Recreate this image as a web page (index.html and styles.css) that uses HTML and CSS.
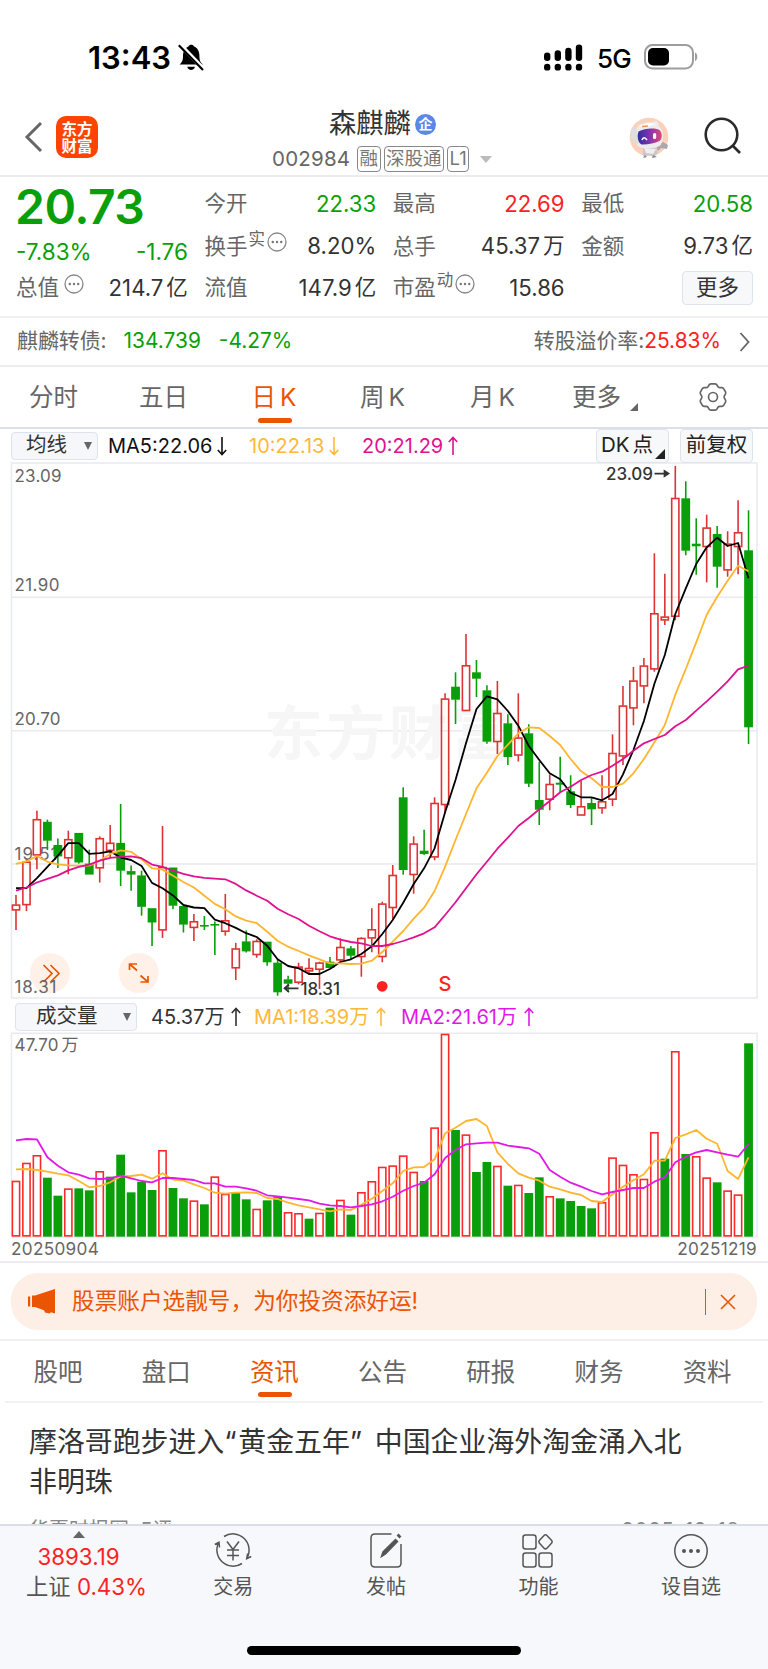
FILE: index.html
```html
<!DOCTYPE html>
<html lang="zh-CN">
<head>
<meta charset="utf-8">
<title>森麒麟 002984</title>
<link rel="stylesheet" href="styles.css">
</head>
<body>
<div class="status">
  <span class="clock">13:43</span>
  <svg class="bell" width="26" height="27" viewBox="0 0 26 27"><path d="M1.500 20.500c2.500-2 3.500-4 3.500-8.500C5 7 7.700 3.500 10.400 2.600 11.300.2 15.200.2 16.100 2.600c3 1 5.300 4.400 5.300 9 0 5 1 7 3.600 9z"/><path d="M9.300 22.800h7.600c-.5 4.200-7.100 4.200-7.600 0z"/><path d="M1.500 0 25 24.500" stroke="#fff" stroke-width="4.200"/><path d="M.8 1.200 25 26" stroke="#000" stroke-width="2.200"/></svg>
  <svg class="signal" width="39" height="27" viewBox="0 0 39 27"><g stroke="#000" stroke-width="6.400" stroke-linecap="round"><path d="M3.200 11.700v2M13.800 9.500v4.200M24.400 7v6.700M35 3.600v10.100"/><path d="M3.200 23v.4M13.800 23v.4M24.400 23v.4M35 23v.4"/></g></svg>
  <span class="net">5G</span>
  <svg class="battery" width="54" height="26" viewBox="0 0 54 26"><rect x="1" y="1" width="48" height="23.500" rx="7.500" fill="none" stroke="#9d9d9d" stroke-width="2"/><rect x="4" y="4" width="21" height="17.500" rx="5" fill="#000"/><path d="M51 8.500c3 1 3 7.500 0 8.500z" fill="#9d9d9d"/></svg>
</div>

<header class="head">
  <svg class="back" width="20" height="34" viewBox="0 0 20 34"><path d="M17 3 3 17l14 14" fill="none" stroke="#666" stroke-width="3"/></svg>
  <div class="logo">东方<br>财富</div>
  <div class="title">
    <div class="name">森麒麟<span class="ent">企</span></div>
    <div class="code"><span class="num">002984</span><span class="tag">融</span><span class="tag">深股通</span><span class="tag">L1</span><i class="drop"></i></div>
  </div>
  <svg class="robot" width="42" height="42" viewBox="0 0 42 42">
    <defs><linearGradient id="visor" x1="0" x2="1"><stop offset="0" stop-color="#2e2e9e"/><stop offset=".5" stop-color="#8333b0"/><stop offset="1" stop-color="#e04a72"/></linearGradient></defs>
    <circle cx="21" cy="20" r="19.300" fill="#fdd0b9"/>
    <path d="M15 31h13l2 5-4 4-5-2-6 1z" fill="#c9c7c9"/><path d="M16 31l12 1-3 5-7-1z" fill="#eee"/><path d="M28 29l7-4 5 3-1 4-6-1-3 3z" fill="#aaa8ab"/>
    <path d="M17 38l-2 3 4-1zM25 38l-1 3 5-1z" fill="#888"/>
    <path d="M8 16C8 8 13 5.500 22 5.500c4 0 5-2 7-1 2 .8 1 3 2 5 5 3 5 13 2 18-2 4-22 6-24 0-2-3-1-7-1-11.500z" fill="#ececee"/>
    <path d="M5 10c-4 5-3 12 4 18l2-3-2-11z" fill="#dededf"/>
    <path d="M11 9l9-3 8 1-9 3z" fill="#fff"/><path d="M14 9.500l6-.5" stroke="#f09a48" stroke-width="1.500"/>
    <path d="M10.500 14.500c6-3 15-4 21-1.500 3 3 3 8.500 0 11-5 2.500-13 4-18 3.500-4-2-4.500-9-3-13z" fill="url(#visor)"/>
    <path d="M14 23c1-3 3-3 5 0" fill="none" stroke="#fff" stroke-width="1.500"/><rect x="25" y="16" width="3.200" height="6" rx="1.600" fill="#fff"/>
  </svg>
  <svg class="search" width="40" height="40" viewBox="0 0 40 40"><circle cx="18.500" cy="17.500" r="15.800"/><path d="m29.500 28.500 7.500 7.500"/></svg>
</header>

<section class="quote">
  <div class="lead">
    <div class="price">20.73</div>
    <div class="chg"><span>-7.83%</span><span>-1.76</span></div>
    <div class="row last"><label>总值<svg class="dots" viewBox="0 0 20 20"><use href="#more"/></svg></label><b>214.7<em>亿</em></b></div>
  </div>
  <div class="col">
    <div class="row"><label>今开</label><b class="down">22.33</b></div>
    <div class="row"><label>换手<sup>实</sup><svg class="dots" viewBox="0 0 20 20"><use href="#more"/></svg></label><b>8.20%</b></div>
    <div class="row"><label>流值</label><b>147.9<em>亿</em></b></div>
  </div>
  <div class="col">
    <div class="row"><label>最高</label><b class="up">22.69</b></div>
    <div class="row"><label>总手</label><b>45.37<em>万</em></b></div>
    <div class="row"><label>市盈<sup>动</sup><svg class="dots" viewBox="0 0 20 20"><use href="#more"/></svg></label><b>15.86</b></div>
  </div>
  <div class="col">
    <div class="row"><label>最低</label><b class="down">20.58</b></div>
    <div class="row"><label>金额</label><b>9.73<em>亿</em></b></div>
    <div class="row end"><span class="morebtn">更多</span></div>
  </div>
  <svg width="0" height="0" class="defs"><symbol id="more" viewBox="0 0 20 20"><circle cx="10" cy="10" r="9" fill="none" stroke="#888" stroke-width="1.300"/><circle cx="5.800" cy="10" r="1.200" fill="#777"/><circle cx="10" cy="10" r="1.200" fill="#777"/><circle cx="14.200" cy="10" r="1.200" fill="#777"/></symbol></svg>
</section>

<section class="bond">
  <span class="bname">麒麟转债:</span><span class="down bprice">134.739</span><span class="down bpct">-4.27%</span>
  <span class="prem">转股溢价率:</span><span class="up rate">25.83%</span>
  <svg class="chev" width="12" height="20" viewBox="0 0 12 20"><path d="m1.500 1 8 9-8 9" fill="none" stroke="#666" stroke-width="1.800"/></svg>
</section>

<nav class="periods">
  <span>分时</span><span>五日</span><span class="on">日<i>K</i></span><span>周<i>K</i></span><span>月<i>K</i></span><span class="moretab">更多<i class="corner"></i></span>
  <span class="gear"><svg width="30" height="30" viewBox="0 0 30 30" fill="none" stroke="#666" stroke-width="1.700"><path d="M11.200 2.800q.8-1 2-1h3.600q1.200 0 2 1l1.200 1.900q.7 1 1.900 1h2q1.300.1 1.900 1.200l1.700 3q.5 1.100-.1 2.200l-1 1.700q-.6 1.200 0 2.400l1 1.700q.6 1.100.1 2.200l-1.700 3q-.6 1.100-1.900 1.200h-2q-1.200 0-1.900 1l-1.200 1.900q-.8 1-2 1h-3.600q-1.200 0-2-1L10 25.300q-.7-1-1.900-1h-2q-1.300-.1-1.900-1.200l-1.700-3q-.5-1.100.1-2.200l1-1.700q.6-1.200 0-2.400l-1-1.700q-.6-1.100-.1-2.200l1.700-3q.6-1.100 1.900-1.200h2q1.200 0 1.900-1z"/><circle cx="15" cy="15" r="4.500"/></svg></span>
</nav>

<section class="malegend">
  <span class="select sel1">均线<i></i></span>
  <span class="ma5">MA5:22.06<svg class="arr" viewBox="0 0 10 20"><path d="M5 1v17.500M.8 14 5 18.500 9.200 14"/></svg></span>
  <span class="ma10">10:22.13<svg class="arr" viewBox="0 0 10 20"><path d="M5 1v17.500M.8 14 5 18.500 9.200 14"/></svg></span>
  <span class="ma20">20:21.29<svg class="arr" viewBox="0 0 10 20"><path d="M5 19V1.500M.8 6 5 1.500 9.200 6"/></svg></span>
  <span class="box dk">DK<em>点</em><i></i></span><span class="box fq">前复权</span>
</section>

<svg class="kline" id="kline" width="768" height="537" viewBox="0 462 768 537">
  <g class="frame"><rect x="11.500" y="463" width="745.500" height="535"/><path d="M11.500 597.300H757M11.500 730.700H757M11.500 864H757"/></g>
  <text class="mark" x="264" y="755" textLength="246">东方财富</text>
  <circle cx="50" cy="973" r="20" fill="#fff0e8"/><circle cx="138.700" cy="973" r="20" fill="#fff0e8"/>
  <path class="tool" d="m43.500 965 8.500 8.500-8.500 8.500M50.500 965l8.500 8.500-8.500 8.500"/>
  <path class="tool" d="M137 970.500l-7.500-6.500M129.500 970v-6h7.500M140.500 975.500l7.500 6.500M148 976v6h-7.500"/>
  <g class="axis"><text x="14.500" y="481.500" textLength="47">23.09</text><text x="14.500" y="591" textLength="45">21.90</text><text x="14.500" y="724.800" textLength="46">20.70</text><text x="14.500" y="859.500" textLength="43">19.51</text><text x="14.500" y="993" textLength="42">18.31</text></g>
  <g id="candles"></g>
  <g class="ext"><text x="606" y="480" textLength="47">23.09</text><path d="M654.500 473.600h14M664.500 471l4 2.600-4 2.600z"/><text x="300.500" y="995" textLength="39.500">18.31</text><path d="M284 988.300h14.500M289 984.500l-4.500 3.800 4.500 3.800"/></g>
  <circle cx="382.200" cy="986.300" r="5.400" fill="#fb2222"/><text class="sell" x="438.500" y="991">S</text>
</svg>

<section class="vollegend">
  <span class="select sel2">成交量<i></i></span>
  <span class="v0">45.37万<svg class="arr" viewBox="0 0 10 20"><path d="M5 19V1.500M.8 6 5 1.500 9.200 6"/></svg></span>
  <span class="v1">MA1:18.39万<svg class="arr" viewBox="0 0 10 20"><path d="M5 19V1.500M.8 6 5 1.500 9.200 6"/></svg></span>
  <span class="v2">MA2:21.61万<svg class="arr" viewBox="0 0 10 20"><path d="M5 19V1.500M.8 6 5 1.500 9.200 6"/></svg></span>
</section>

<svg class="volume" width="768" height="206" viewBox="0 1032 768 206">
  <g class="frame"><rect x="11.500" y="1033.300" width="745.500" height="203.700"/></g>
  <g class="axis"><text x="14.500" y="1051" textLength="44">47.70</text><text x="61.500" y="1051">万</text></g>
  <g id="bars"></g>
</svg>
<div class="dates"><span>20250904</span><span>20251219</span></div>

<div class="promo-wrap"><div class="promo">
  <svg class="horn" width="28" height="25" viewBox="0 0 28 25" fill="#ea5504"><path d="M0 7.500h2.200v10H0zM4 6.500h3L27 0v24.500l-4-1.300-1.500 1.300-4.500-1-1-2.300L7 18H4z"/></svg>
  <span class="ptext">股票账户选靓号，为你投资添好运!</span>
  <i class="bar"></i>
  <svg class="close" width="16" height="16" viewBox="0 0 16 16"><path d="m1 1 14 14M15 1 1 15" stroke="#ea5504" stroke-width="1.600"/></svg>
</div></div>

<nav class="tabs"><span>股吧</span><span>盘口</span><span class="on">资讯</span><span>公告</span><span>研报</span><span>财务</span><span>资料</span></nav>

<article class="news">
  <h2>摩洛哥跑步进入<q>“</q>黄金五年<q class="r">”</q>中国企业海外淘金涌入北<br>非明珠</h2>
  <div class="meta"><span>华夏时报网&nbsp; 5评</span><span class="day">2025-12-18</span></div>
</article>

<footer class="dock">
  <div class="index"><i class="tri"></i><div class="pt">3893.19</div><div class="pc">上证 <b>0.43%</b></div></div>
  <div class="item"><svg width="38" height="36" viewBox="0 0 38 36"><path d="M10 4.500A16.200 16.200 0 0 1 33 26M28 31.500A16.200 16.200 0 0 1 5 10M.8 12.500 5 10.300l.5 5.200M37.200 24.500 32.700 26.700l1-5.200M13 9.500l6 8 6-8M19 17.500v11M13 18h12M13 23.500h12"/></svg><span>交易</span></div>
  <div class="item"><svg width="38" height="36" viewBox="0 0 38 36"><path d="M24.500 2H8Q4 2 4 6v25q0 4 4 4h22q4 0 4-4V12"/><path d="M14.500 24.500 16 20 28.500 7.500l2 2L18.500 22z" fill="#555"/><path d="m31 5 2-2" stroke-width="4"/></svg><span>发帖</span></div>
  <div class="item"><svg width="38" height="36" viewBox="0 0 38 36"><rect x="4" y="3" width="13" height="14" rx="2.500"/><rect x="4" y="21" width="13" height="14" rx="2.500"/><rect x="20" y="21" width="13" height="14" rx="2.500"/><path d="m25.300 3.200-5 5.300q-1 1.300 0 2.600l5 5.300q1.200 1 2.400 0l5-5.300q1-1.300 0-2.600l-5-5.300q-1.200-1-2.400 0z"/></svg><span>功能</span></div>
  <div class="item"><svg width="38" height="36" viewBox="0 0 38 36"><circle cx="19" cy="19" r="16.200"/><g fill="#555" stroke="none"><circle cx="12" cy="19" r="2"/><circle cx="19" cy="19" r="2"/><circle cx="26" cy="19" r="2"/></g></svg><span>设自选</span></div>
  <i class="home"></i>
</footer>
<script src="chart.js"></script>
</body>
</html>
```
FILE: styles.css
```css
* { box-sizing: border-box; }
body {
  margin: 0; width: 768px; height: 1669px; overflow: hidden;
  display: flex; flex-direction: column; background: #fff; color: #333;
  font-family: Inter, "Noto Sans CJK SC", sans-serif; line-height: 1;
}
body > * { flex: none; }
i, em, b { font-style: normal; font-weight: 400; }
svg { display: block; flex: none; }
.down { color: #0a9f0a !important; }
.up { color: #fb2222 !important; }

.status { height: 98px; display: flex; align-items: center; padding: 16px 70px 0 88px; color: #000; }
.clock { font-size: 31px; font-weight: 600; width: 90px; }
.net { font-size: 26px; font-weight: 500; margin: 3px 13px 0 14px; letter-spacing: -.8px; }
.signal { margin-left: auto; }

.head { height: 79px; display: flex; position: relative; border-bottom: 2px solid #ececee; padding-left: 24px; align-items: flex-start; }
.back { margin-top: 22px; }
.logo { margin: 18px 0 0 12px; width: 42px; height: 42px; border-radius: 10px; background: #ff4400; color: #fff; font-size: 15.500px; line-height: 17px; font-weight: 700; text-align: center; padding-top: 4px; font-family: "Noto Sans CJK SC", sans-serif; }
.title { width: 230px; margin-left: 174px; }
.name { display: flex; align-items: center; font-size: 27.300px; height: 30px; margin: 11px 0 0 57px; }
.ent { width: 21px; height: 21px; border-radius: 50%; background: #5b87e8; color: #fff; font-size: 14px; font-weight: 700; line-height: 20px; text-align: center; margin-left: 4px; }
.code { display: flex; align-items: center; color: #666; font-size: 20.500px; margin-top: 6px; height: 28px; }
.num { letter-spacing: .2px; width: 85px; }
.tag { border: 1.500px solid #888; border-radius: 4px; height: 26px; line-height: 23px; font-size: 18.500px; padding: 0 1.500px; margin-right: 3px; color: #777; }
.drop { border: 6px solid transparent; border-top: 7px solid #bbb; border-bottom: 0; margin-left: 8px; }
.robot { margin: 19px 0 0 126px; }
.search { margin: 19px 0 0 33px; fill: none; stroke: #2a2a2a; stroke-width: 2.600; }

.quote { height: 141px; display: flex; gap: 16.500px; padding: 7px 15px 0 16px; border-bottom: 2px solid #f0f0f2; position: relative; }
.defs { position: absolute; }
.lead { width: 172px; color: #0a9f0a; }
.col { width: 172px; }
.price { font-size: 48px; font-weight: 600; height: 46px; line-height: 46px; letter-spacing: -.5px; margin-left: -1px; }
.chg { display: flex; justify-content: space-between; font-size: 22.500px; height: 37px; line-height: 44px; }
.row { display: flex; justify-content: space-between; align-items: center; height: 41.500px; font-size: 22.200px; }
.col .row:first-child { margin-top: -1px; height: 42.500px; padding-bottom: 1px; }
.row label { color: #666; font-size: 21.500px; display: flex; align-items: center; }
.row b { color: #333; display: flex; align-items: center; }
.row b em { font-size: 21.500px; margin-left: 3px; }
.row sup { font-size: 16.500px; margin: -15px 2px 0 1px; line-height: 1; }
.dots { width: 20px; height: 20px; margin: -8px 0 0 0; }
.last label .dots { margin-left: 5px; }
.row.end { justify-content: flex-end; }
.morebtn { width: 71px; height: 34px; line-height: 31px; border: 1.500px solid #dfe3ea; border-radius: 4px; background: #f7f8fa; text-align: center; font-size: 21.500px; }

.bond { height: 49px; display: flex; align-items: center; padding: 0 17px 0 17px; font-size: 20.900px; border-bottom: 2px solid #ececee; }
.bname, .prem { color: #666; }
.bprice { margin-left: 17px; }
.bpct { margin-left: 18px; }
.prem { margin-left: auto; }
.chev { margin-left: 18px; }

.periods { height: 62px; position: relative; display: flex; align-items: center; font-size: 24.500px; color: #666; border-bottom: 2px solid #dcdfe8; padding-left: 29px; }
.periods span { flex: none; width: 110px; position: relative; display: flex; align-items: center; height: 60px; }
.periods span:nth-child(2) { width: 112.500px; }
.periods span:nth-child(3) { width: 108.500px; }
.periods span:nth-child(5) { width: 102px; }
.periods span:nth-child(6) { width: 126px; }
.periods i { margin-left: 4px; }
.on { color: #ea5504; }
.on::after { content: ""; position: absolute; width: 34.500px; height: 5.500px; border-radius: 2.500px; background: #ea5504; bottom: 4px; left: 6px; }
.periods .corner { border: 4px solid #666; border-top-color: transparent; border-left-color: transparent; margin: 20px 0 0 9px; }
.periods .gear { width: 30px; }

.malegend { height: 33px; display: flex; align-items: center; padding: 0 15px 0 11px; font-size: 20px; color: #111; }
.select { display: flex; align-items: center; justify-content: space-between; background: #f6f7fa; border: 1.500px solid #dfe3ea; border-radius: 4px; height: 28px; font-size: 20.500px; color: #333; }
.select i { border: 4px solid transparent; border-top: 8px solid #666; border-bottom: 0; }
.sel1 { width: 87px; padding: 0 5px 0 14px; margin-right: 10px; }
.arr { width: 10px; height: 20px; fill: none; stroke: currentColor; stroke-width: 1.600; margin-left: 5px; }
.malegend > span, .vollegend > span { display: flex; align-items: center; flex: none; }
.ma5 { width: 141px; } .ma10 { width: 113px; color: #ffb83a; } .ma20 { color: #e0118f; }
.box { background: #f7f8fa; border: 1.500px solid #dfe3ea; border-radius: 4px; height: 34px; color: #222; font-size: 20.500px; position: relative; }
.dk { width: 73px; margin-left: auto; padding-left: 4px; }
.dk em { margin-left: 3px; }
.dk i { position: absolute; right: 3px; bottom: 3px; border: 5.500px solid #222; border-top-color: transparent; border-left-color: transparent; }
.fq { width: 73px; justify-content: center; margin-left: 11px; }

.frame { fill: none; stroke: #e8eaf0; stroke-width: 1.500; }
.kline text, .volume text { font-size: 17px; }
.axis text { fill: #666; }
.kline .mark { font-size: 59px; font-weight: 700; fill: #f6f6f7; font-family: "Noto Sans CJK SC", sans-serif; }
.tool { fill: none; stroke: #ea5504; stroke-width: 1.700; }
.ext text { fill: #333; font-weight: 500; } .ext path { fill: none; stroke: #333; stroke-width: 1.700; }
.kline .sell { fill: #fb2222; font-size: 20px; font-weight: 500; }
.r rect, .r path { stroke: #d33; fill: none; stroke-width: 1.600; }
.g rect { fill: #0a9f0a; } .g path { stroke: #0a9f0a; stroke-width: 1.600; }
#bars .r rect { stroke: #fb2a2a; }
polyline { fill: none; stroke-width: 1.800; stroke-linejoin: round; }

.vollegend { height: 33px; display: flex; align-items: center; padding: 2px 0 0 15px; font-size: 20px; }
.sel2 { width: 122px; padding: 0 5px 0 20px; margin-right: 14px; }
.v0 { width: 103px; } .v1 { width: 147px; color: #ffb83a; } .v2 { color: #e01ae6; }
.vollegend .arr { margin-left: 7px; }
.dates { height: 25px; display: flex; justify-content: space-between; padding: 1px 11px 0; font-size: 17.200px; letter-spacing: .3px; line-height: 20px; color: #666; border-bottom: 2px solid #ececf0; }

.promo-wrap { height: 78px; padding: 10px 11px; border-bottom: 2px solid #f0f0f2; }
.promo { height: 57px; border-radius: 27px; background: #fdeee6; display: flex; align-items: center; padding: 0 21px 0 17px; color: #ea5504; }
.ptext { font-size: 22.650px; margin-left: 16px; }
.bar { width: 1.500px; height: 26px; background: #ea5504; margin-left: auto; }
.close { margin-left: 14px; }

.tabs { height: 62px; margin: 0 5px; border-bottom: 2px solid #f2f2f3; display: flex; font-size: 24.500px; color: #666; padding-left: 28.500px; }
.tabs span { flex: none; width: 108.200px; position: relative; line-height: 62px; }
.tabs span:last-child { width: 60px; }
.tabs .on { color: #ea5504; }
.tabs .on::after { left: 8px; }

.news { height: 121px; padding: 20px 28px 0 29px; overflow: hidden; position: relative; }
.news h2 { margin: 0; font-size: 27.900px; font-weight: 400; line-height: 39.500px; }
.news q { quotes: none; display: inline-block; width: 14px; font-family: Inter, sans-serif; }
.news q.r { width: 25px; }
.meta { display: flex; justify-content: space-between; color: #888; font-size: 20px; margin-top: 18px; }
.day { letter-spacing: 1px; }

.dock { height: 145px; background: #f7f8fb; border-top: 2px solid #d9dde6; position: relative; display: flex; color: #555; font-size: 20px; }
.index { width: 157px; display: flex; flex-direction: column; align-items: center; font-size: 22.300px; padding-top: 5px; }
.tri { border: 6px solid transparent; border-bottom: 7px solid #666; border-top: 0; }
.pt { color: #fb2222; margin-top: 8px; } .pc { margin-top: 8px; padding-left: 16px; white-space: pre; } .pc b { color: #fb2222; }
.item { width: 152.600px; display: flex; flex-direction: column; align-items: center; padding-top: 6px; }
.item svg { fill: none; stroke: #555; stroke-width: 1.500; }
.item span { margin-top: 9px; }
.home { position: absolute; left: 247px; top: 120px; width: 274px; height: 8.500px; border-radius: 5px; background: #000; }
```
FILE: chart.js
```js
const NS = 'http://www.w3.org/2000/svg';
const STEP = 10.465, X0 = 16;
const cx = i => X0 + i * STEP;

// direction, high, body top, body bottom, low
const candles = [
'r',895,904.3,910.7,930,'r',859.3,861.4,905.4,911.1,'r',810.7,818.9,855.7,869.3,'g',819.6,821.8,840.7,850,
'g',838.6,845,856.4,867.9,'r',830.7,838.9,858.6,874.3,'g',832.9,832.9,862.5,863.6,'g',849.6,863.6,874.6,874.6,
'r',836.4,837.9,868.6,882.5,'r',825,842.5,851.1,857.1,'g',803.9,842.9,870.7,886.1,'g',865.4,871.1,874.6,890.7,
'g',870.7,875.4,906.8,915.7,'g',908.2,908.2,922.5,946,'r',826,866.8,930.7,937.9,'g',867.5,867.5,905.7,909.3,
'g',906,906,924.6,932.5,'r',913.9,921,928.2,941,'g',916,925,926.6,930,'g',921.4,924,925.6,955,
'r',893.9,920,932,935.7,'r',942.9,948.2,968.6,980,'g',930.4,941.4,951.4,952.5,'r',939.3,940.7,955.3,957.7,
'g',941.7,941.7,962.3,965.7,'g',959.3,962.7,992.3,995.7,'g',975.7,979.3,983.7,992,'r',962.7,966.3,983,984.3,
'r',958.3,967.7,971.7,974.7,'r',961.7,962.3,970,989,'g',957,961.7,968,968,'r',938.3,946.7,960.7,961.7,
'g',946,948.3,955.7,959.3,'r',937.3,937.7,957.3,976.7,'r',908.3,929,938.7,952.3,'r',901.7,903.3,957.3,962.3,
'r',865,874.7,908.3,918.7,'g',787.3,797.3,870,874.7,'r',836.3,843.3,875.3,893.7,'g',829.7,850.7,854,855,
'r',797.3,802.7,857.7,860.3,'r',693.3,698.3,805.3,813,'g',672.3,686.7,699.7,724,'r',634,665,711.3,711.3,
'g',660,672.3,678.7,697,'g',685.3,690.3,741.7,743.7,'r',681,712.7,742.3,754,'g',714.3,723.3,757,765,
'r',693.3,737.3,755.8,761.5,'g',724.3,733.3,783.7,787,'g',761.7,800,809.7,825,'r',774.3,783.7,800,810.3,
'g',756.7,782.7,784.7,792.7,'g',775.3,791.3,805,808,'r',780.7,806,815.8,815.8,'g',797.7,803,809.3,825,
'r',775.3,801,808.7,813.7,'r',734.3,752.7,800,806,'r',686,705.3,756.7,765,'r',667,680.3,708.7,725.3,
'r',658,665.3,686.7,703.3,'r',553.3,613,669.7,671.7,'r',573.7,616.3,620.7,625,'r',466,497.7,617,620.3,
'g',481.3,498.3,550.7,555.3,'g',518.3,543.7,546.3,574.7,'r',514.7,527.3,547.3,582.3,'g',526,534,566.7,587.7,
'r',531.3,543.3,570.7,576.7,'r',500.3,532,547.3,574.3,'g',510.3,550.3,727.3,744];

const ma5 = [888.2,888.2,878.2,866.8,855.7,843.2,843.2,853.9,853.2,851.4,857.5,860,866,882.9,888.2,895.4,905,907.5,908.2,919.6,923.2,927.9,933.2,937,945.7,959.3,966,968.3,974,974,969,962,959.3,954,946.3,934,920,902.7,884,868.3,848.3,812.3,780,743.3,709,696.3,699.3,711,725.7,746,760,773.3,779.3,792.7,797.3,797.3,800.3,794,774.3,750,721,683.7,655,614,588.3,564,547.3,537.7,546,543,578.3];
const ma10 = [863.9,861.4,856,861.8,864.3,865.4,865.7,865.7,860.7,853.9,850.4,851.8,859.3,868.2,869.6,875.7,882,887.5,895.7,903.9,909.3,916.4,920.7,923,931.7,940.7,946.7,951,955.3,959.3,963.3,963.3,964,963.7,960.7,952,941.7,931,918.7,907.7,891,866.7,840,814,788.3,772.7,756,744.7,733.3,727.3,728,736,745,759,771.3,778.3,787,787,783.7,773.3,759,742.3,725,694.7,669,642.3,614.7,596.7,580.7,565.7,571.3];
const ma20 = [890.7,887.5,882.5,878.9,875.4,870.4,866.8,864.6,860.7,857.9,856.8,856.4,858.2,864.6,866.8,870.7,873.9,876.4,877.9,878.6,879.3,883.9,890.4,895.7,900.7,908.7,914.3,919,925.7,931.3,936.3,939.7,942,943.3,946,946,944,941,937.3,933.3,927.3,915,902.3,888.3,874.3,861.7,848.7,837.7,826,818,809.3,801,792.3,786.7,780,775,771.7,765.7,759,750.7,743.3,739,735,726.3,720,710.7,701.3,691.7,681.3,669.3,665.7];

// volume bars: direction and top, in thirds of a pixel below VBASE
const VBASE = 990, vy = v => VBASE + v / 3;
const volumes = 'r572 r518 r495 g563 g617 r595 g595 g601 r543 g560 g494 g607 g575 g600 r480 g594 g625 r631 g643 r559 r611 g607 g628 r656 g631 g620 r666 r669 g686 r668 g653 r629 g674 r606 r573 r530 r526 r496 r545 g573 r412 r131 g420 r433 g546 g516 r527 g587 r584 g609 g562 r618 g625 g633 g648 g655 r636 r502 r524 r552 r566 r426 g506 r183 g492 r498 r562 g577 r601 r613 g160'.split(' ');
const vma1 = [538,537,540,545,551,556,573,592,588,577,559,558,554,566,550,569,572,583,594,608,611,608,607,609,624,627,638,646,652,658,664,658,660,644,626,603,580,543,532,531,508,430,413,393,387,408,487,522,550,563,572,590,598,608,615,633,636,613,590,571,553,512,512,444,433,420,446,461,543,567,502];
const vma2 = [451,447,448,502,527,547,554,565,567,565,557,565,573,577,564,564,567,570,580,580,590,590,595,602,616,619,623,627,631,641,646,648,652,648,643,634,620,602,588,578,553,504,480,463,460,458,458,467,471,475,491,540,560,578,590,603,613,606,600,594,594,575,562,517,500,487,480,487,494,500,462];

function el(parent, tag, attrs) {
  const n = document.createElementNS(NS, tag);
  for (const k in attrs) n.setAttribute(k, attrs[k]);
  return parent.appendChild(n);
}
function body(g, dir, x, top, bottom) {
  const inset = dir === 'r' ? .8 : 0, w = 8.8;
  el(g, 'rect', { x: x - w / 2 + inset, y: top + inset, width: w - 2 * inset, height: Math.max(bottom - top - 2 * inset, 1.2) });
}
function line(parent, ys, color) {
  el(parent, 'polyline', { points: ys.map((y, i) => cx(i).toFixed(1) + ',' + y.toFixed(1)).join(' '), stroke: color });
}

const kg = document.getElementById('candles');
for (let i = 0; i * 5 < candles.length; i++) {
  const [dir, hi, top, bottom, lo] = candles.slice(i * 5, i * 5 + 5);
  const g = el(kg, 'g', { class: dir }), x = cx(i);
  if (hi < top) el(g, 'path', { d: `M${x} ${hi}V${top + .5}` });
  if (lo > bottom) el(g, 'path', { d: `M${x} ${bottom - .5}V${lo}` });
  body(g, dir, x, top, bottom);
}
line(kg, ma5, '#000');
line(kg, ma10, '#ffb52e');
line(kg, ma20, '#e0118f');

const vg = document.getElementById('bars');
volumes.forEach((s, i) => body(el(vg, 'g', { class: s[0] }), s[0], cx(i), vy(+s.slice(1)), vy(740)));
line(vg, vma1.map(vy), '#ffb52e');
line(vg, vma2.map(vy), '#e01ae6');
```
